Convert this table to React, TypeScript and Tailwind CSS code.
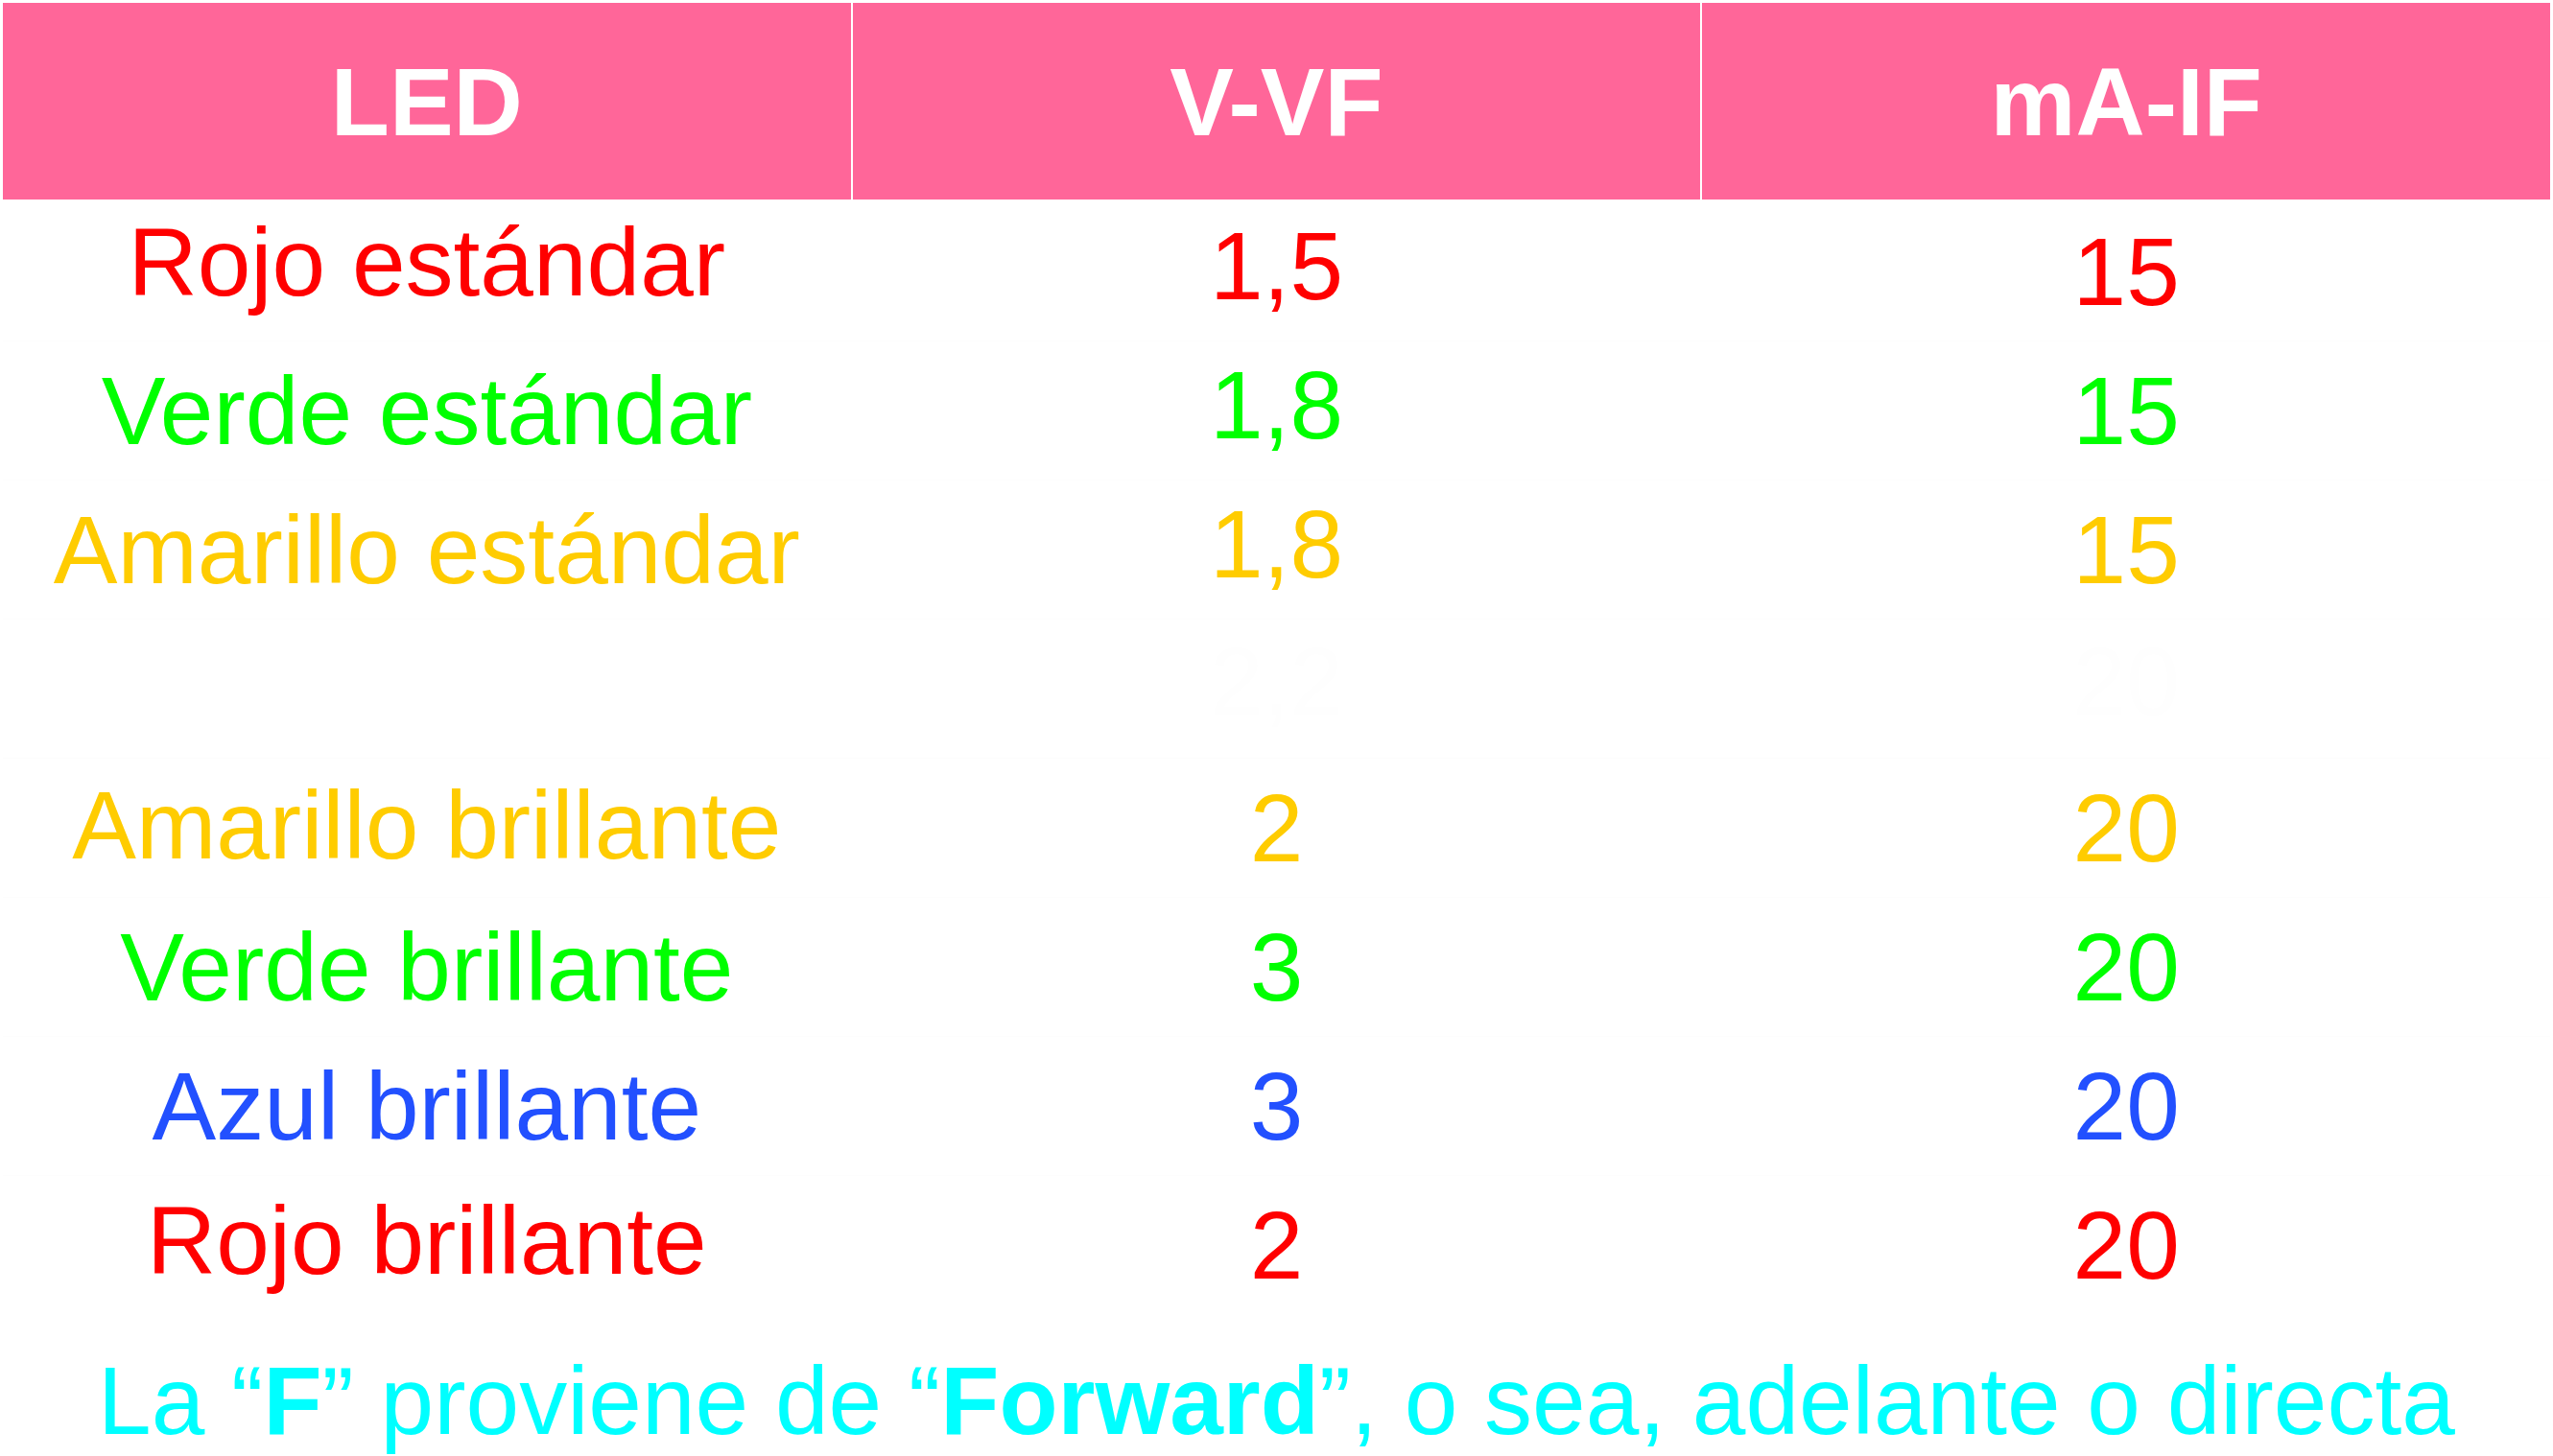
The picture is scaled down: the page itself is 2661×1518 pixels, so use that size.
import React from 'react';

type Cell = { text: string; shift?: string };
type Row = { color: string; cells: [Cell, Cell, Cell] };

const rows: Row[] = [
  { color: 'text-[#ff0000]', cells: [{ text: 'Rojo estándar', shift: 'pb-[20px]' }, { text: '1,5', shift: 'pb-[12px]' }, { text: '15' }] },
  { color: 'text-[#00ff00]', cells: [{ text: 'Verde estándar' }, { text: '1,8', shift: 'pb-[12px]' }, { text: '15' }] },
  { color: 'text-[#ffcc00]', cells: [{ text: 'Amarillo estándar' }, { text: '1,8', shift: 'pb-[12px]' }, { text: '15' }] },
  // nearly invisible leftover values in the empty row
  { color: 'text-[#fefefe]', cells: [{ text: '' }, { text: '2,2', shift: 'pb-[16px]' }, { text: '20', shift: 'pb-[16px]' }] },
  { color: 'text-[#ffcc00]', cells: [{ text: 'Amarillo brillante', shift: 'pb-[6px]' }, { text: '2' }, { text: '20' }] },
  { color: 'text-[#00ff00]', cells: [{ text: 'Verde brillante' }, { text: '3' }, { text: '20' }] },
  { color: 'text-[#2250ff]', cells: [{ text: 'Azul brillante' }, { text: '3' }, { text: '20' }] },
  { color: 'text-[#ff0000]', cells: [{ text: 'Rojo brillante', shift: 'pb-[10px]' }, { text: '2' }, { text: '20' }] },
];

const headers = ['LED', 'V-VF', 'mA-IF'];

export default function App() {
  return (
    <div className="w-[2661px] h-[1518px] bg-white overflow-hidden font-['Liberation_Sans',Arial,sans-serif]">
      <div className="pt-[3px] pl-[3px] w-[2658px]">
        {/* header */}
        <div className="grid grid-cols-3 gap-[2px] h-[205px]">
          {headers.map((h) => (
            <div key={h} className="bg-[#ff6699] flex items-center justify-center">
              <span className="text-white font-bold text-[100px] leading-[100px]">{h}</span>
            </div>
          ))}
        </div>

        {/* body */}
        <div className="mt-[2px]">
          {rows.map((row, i) => (
            <div
              key={i}
              className={`grid grid-cols-3 gap-[2px] h-[145px] ${i > 0 ? 'border-t border-[#fdfdfd]' : ''}`}
            >
              {row.cells.map((c, j) => (
                <div key={j} className={`flex items-center justify-center ${c.shift ?? ''}`}>
                  <span className={`${row.color} text-[100px] leading-[100px] whitespace-nowrap`}>{c.text}</span>
                </div>
              ))}
            </div>
          ))}
        </div>
      </div>

      <p className="mt-[40px] text-center text-[#00ffff] text-[100px] leading-[100px] whitespace-nowrap">
        La “<b>F</b>” proviene de “<b>Forward</b>”, o sea, adelante o directa
      </p>
    </div>
  );
}
